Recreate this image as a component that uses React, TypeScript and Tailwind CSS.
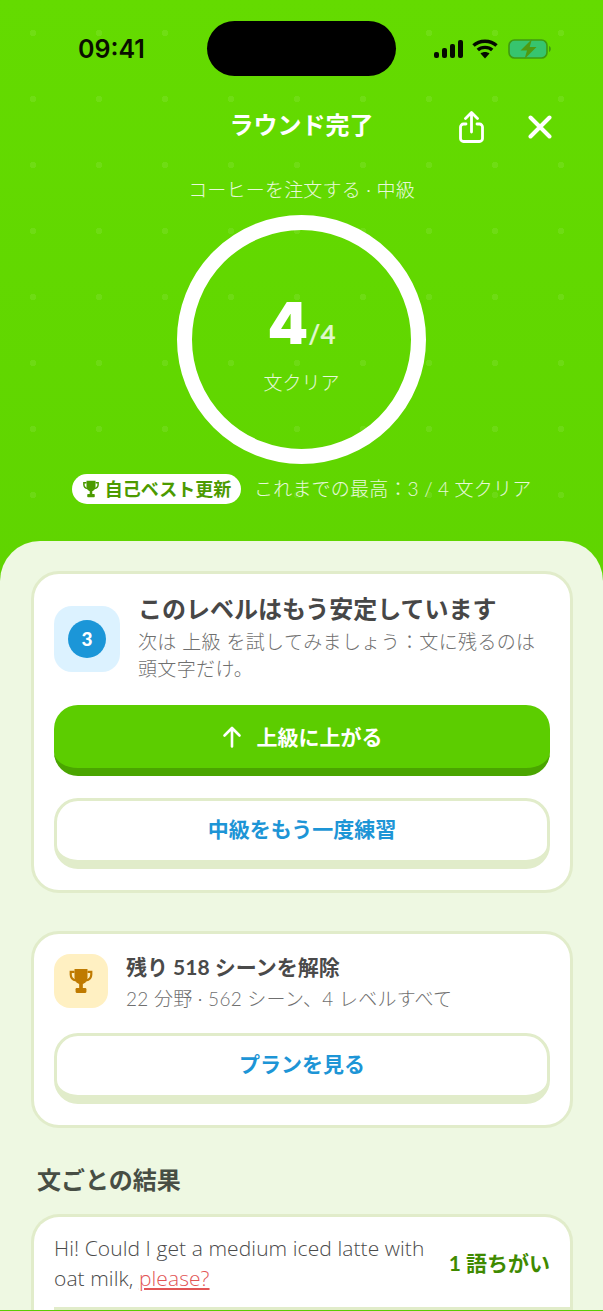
import React from "react";

const font = "font-['Lato','Noto_Sans_CJK_JP',sans-serif]";

function StatusBar() {
  return (
    <div className="flex h-[76px] items-start justify-between pl-[78px] pr-[52px] pt-[21px]">
      <span className="mt-[13px] text-[25px] leading-[30px] font-semibold text-[#0a0f00] font-['Inter',sans-serif]">09:41</span>
      <div className="absolute left-[207px] top-[21px] h-[55px] w-[189px] rounded-full bg-black" />
      <div className="mt-[17px] flex items-center">
        <svg width="31" height="20" viewBox="0 0 31 20">
          <rect x="1" y="13" width="5" height="6" rx="2" fill="#050a00" />
          <rect x="9" y="9" width="5" height="10" rx="2" fill="#050a00" />
          <rect x="17" y="5" width="5" height="14" rx="2" fill="#050a00" />
          <rect x="25" y="1" width="5" height="18" rx="2" fill="#050a00" />
        </svg>
        <svg className="ml-[8px]" width="26" height="20" viewBox="0 0 26 20" fill="none" stroke="#050a00" strokeWidth="3.400">
          <path d="M1.500 6.500C7.500 .8 18.500 .8 24.500 6.500" />
          <path d="M5.800 11C9.500 7.500 16.500 7.500 20.200 11" />
          <path d="M13 19.500l-4.500-5c2.500-2 6.500-2 9 0z" fill="#050a00" stroke="none" />
        </svg>
        <svg className="ml-[10px]" width="43" height="22" viewBox="0 0 43 22">
          <rect x="1" y="2" width="38" height="18" rx="5.500" fill="#37c46e" stroke="#3f9a10" strokeWidth="1.600" />
          <path d="M41 8v6c1.200-.4 1.800-1.600 1.800-3s-.6-2.600-1.800-3z" fill="#3f9a10" />
          <path d="M24 1 12.500 12.500h6.500L16.500 21 28.500 9h-6.800z" fill="#4f9a10" />
        </svg>
      </div>
    </div>
  );
}

function Header() {
  return (
    <div className="relative flex h-[64px] items-center justify-center pt-[34px]">
      <h1 className="text-[24px] leading-[32px] font-bold text-white">ラウンド完了</h1>
      <svg className="absolute left-[458px] top-[35px]" width="27" height="33" viewBox="0 0 27 33" fill="none" stroke="white" strokeWidth="2.800" strokeLinecap="round" strokeLinejoin="round">
        <path d="M8 13H5.500a3 3 0 0 0-3 3v11.500a3 3 0 0 0 3 3h16a3 3 0 0 0 3-3V16a3 3 0 0 0-3-3H19" />
        <path d="M13.500 21V2M7.500 7.500l6-6 6 6" />
      </svg>
      <svg className="absolute left-[528px] top-[39px]" width="24" height="24" viewBox="0 0 24 24" fill="none" stroke="white" strokeWidth="4" strokeLinecap="round">
        <path d="M2.500 2.500l19 19M21.500 2.500l-19 19" />
      </svg>
    </div>
  );
}

function Trophy({ color, size }: { color: string; size: number }) {
  return (
    <svg width={size} height={size} viewBox="0 0 24 24" fill={color}>
      <path d="M6 1h12v8a6 6 0 0 1-12 0z" />
      <path d="M6 3.500H2.500v2.500C2.500 9 4.500 11 7.500 11.500M18 3.500h3.500v2.500c0 3-2 5-5 5.500" fill="none" stroke={color} strokeWidth="2" />
      <rect x="10.300" y="14" width="3.400" height="6" />
      <rect x="7" y="18.500" width="10" height="4.500" rx="1" />
    </svg>
  );
}

function Hero() {
  return (
    <div className="flex flex-col items-center">
      <p className="mt-[36px] text-[19px] leading-[28px] tracking-[0.2px] font-light text-white/85">コーヒーを注文する · 中級</p>
      <div className="mt-[11px] flex h-[249px] w-[249px] flex-col items-center rounded-full border-[15px] border-white">
        <div className="mt-[58px] flex items-baseline text-white">
          <span className="font-['Inter',sans-serif] text-[58px] leading-[70px] font-black">4</span>
          <span className="text-[26px] leading-[30px] font-bold text-white/80">/4</span>
        </div>
        <span className="mt-[11px] text-[19px] leading-[28px] font-light text-white/85">文クリア</span>
      </div>
      <div className="mt-[10px] flex items-center gap-[13px] self-start pl-[72px]">
        <span className="flex h-[30px] w-[169px] items-center justify-center gap-[5px] rounded-full bg-white text-[18px] font-bold text-[#4c9a00]">
          <Trophy color="#4c9a00" size={18} />
          自己ベスト更新
        </span>
        <span className="text-[19px] tracking-[0.2px] font-light text-white/85">これまでの最高：3 / 4 文クリア</span>
      </div>
    </div>
  );
}

function Outline({ children }: { children: React.ReactNode }) {
  return (
    <button className="flex h-[71px] w-full items-center justify-center rounded-[24px] border-[3px] border-b-[9px] border-[#e1ecca] bg-white pb-[3px] text-[21px] font-bold text-[#1d95d6]">
      {children}
    </button>
  );
}

export default function App() {
  return (
    <div className={`${font} relative h-[1311px] w-[603px] overflow-hidden bg-gradient-to-b from-[#64db00] to-[#5acd00]`}>
      <div className="h-[541px] bg-[radial-gradient(circle,rgba(255,255,255,0.08)_3px,transparent_3.5px)] bg-[length:66px_66px]">
        <StatusBar />
        <Header />
        <Hero />
      </div>
      <div className="rounded-t-[40px] bg-[#eef8e2] pl-[31px] pr-[30px] pt-[30px]">
        <section className="rounded-[28px] border-[3px] border-[#e1ecca] bg-white px-[20px] pt-[18px] pb-[21px]">
          <div className="flex gap-[18px]">
            <div className="mt-[14px] flex h-[66px] w-[66px] shrink-0 items-center justify-center rounded-[18px] bg-[#dcf2ff]">
              <span className="flex h-[38px] w-[38px] items-center justify-center rounded-full bg-[#1b96d8] text-[19px] font-black text-white">3</span>
            </div>
            <div>
              <h2 className="text-[24px] leading-[34px] font-bold text-[#474747]">このレベルはもう安定しています</h2>
              <p className="mt-[2px] text-[19px] leading-[27px] tracking-[0.35px] font-light text-[#6f6f6f]">次は 上級 を試してみましょう：文に残るのは頭文字だけ。</p>
            </div>
          </div>
          <button className="mt-[23px] flex h-[71px] w-full items-center justify-center gap-[15px] rounded-[24px] border-b-[8px] border-[#4aa500] bg-[#5ccd00] text-[21px] font-bold text-white">
            <svg width="20" height="22" viewBox="0 0 20 22" fill="none" stroke="white" strokeWidth="2.600" strokeLinecap="round" strokeLinejoin="round">
              <path d="M10 20.500V2M2.500 9.500 10 2l7.500 7.500" />
            </svg>
            上級に上がる
          </button>
          <div className="mt-[22px]">
            <Outline>中級をもう一度練習</Outline>
          </div>
        </section>

        <section className="mt-[38px] rounded-[28px] border-[3px] border-[#e1ecca] bg-white px-[20px] pt-[20px] pb-[21px]">
          <div className="flex gap-[18px]">
            <div className="flex h-[54px] w-[54px] shrink-0 items-center justify-center rounded-[16px] bg-[#fff0c2]">
              <Trophy color="#bf7a00" size={26} />
            </div>
            <div className="-mt-[3px]">
              <h3 className="text-[21px] leading-[32px] font-bold text-[#4a4a4a]">残り 518 シーンを解除</h3>
              <p className="text-[19px] leading-[32px] tracking-[0.25px] font-light text-[#6f6f6f]">22 分野 · 562 シーン、4 レベルすべて</p>
            </div>
          </div>
          <div className="mt-[18px]">
            <Outline>プランを見る</Outline>
          </div>
        </section>

        <h2 className="mt-[35px] pl-[6px] text-[24px] leading-[34px] font-bold text-[#474e44]">文ごとの結果</h2>

        <section className="mt-[17px] rounded-t-[28px] border-x-[3px] border-t-[3px] border-[#e1ecca] bg-white pl-[20px]">
          <div className="flex items-center justify-between border-b-[3px] border-[#e1ecca] pt-[16px] pb-[14px] pr-[20px]">
            <p className="w-[380px] font-['Open_Sans',sans-serif] text-[21px] leading-[30px] tracking-[0.08px] font-light text-[#4a4a4a]">
              Hi! Could I get a medium iced latte with oat milk, <span className="text-[#e25555] underline">please?</span>
            </p>
            <span className="text-[21px] font-bold text-[#3f8a00]">1 語ちがい</span>
          </div>
        </section>
      </div>
    </div>
  );
}
